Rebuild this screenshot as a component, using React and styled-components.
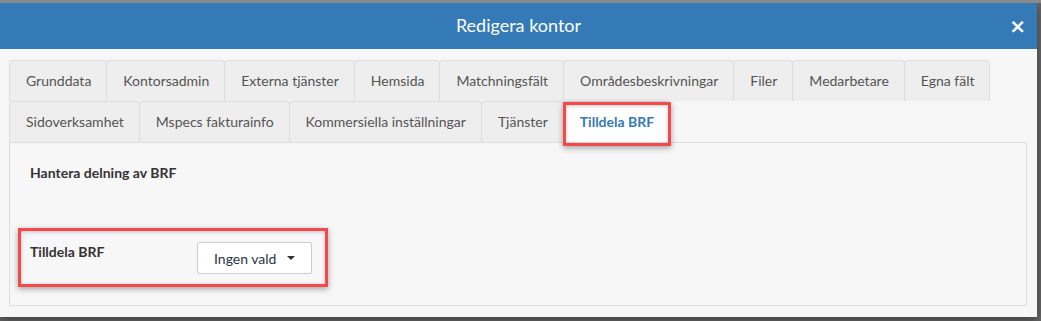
import React from 'react';
import styled, { createGlobalStyle } from 'styled-components';

const GlobalStyle = createGlobalStyle`
  * { box-sizing: border-box; }
  body {
    margin: 0;
    font-family: Lato, "Open Sans", sans-serif;
    font-size: 14px;
    color: #333;
  }
`;

const Backdrop = styled.div`
  width: 1041px;
  height: 321px;
  background: #666;
  border-top: 3px solid #8a8a8a;
  overflow: hidden;
`;

const Modal = styled.div`
  width: 1037px;
  height: 314px;
  background: #f7f7f7;
  display: flex;
  flex-direction: column;
  box-shadow: 0 3px 9px rgba(0, 0, 0, 0.4);
`;

const Header = styled.div`
  position: relative;
  height: 46px;
  background: #337ab7;
  color: #fff;
  display: flex;
  justify-content: center;
  padding-top: 9px;
`;

const Title = styled.h4`
  margin: 0;
  font-size: 18px;
  font-weight: 400;
  line-height: 26px;
`;

const Close = styled.button`
  position: absolute;
  right: 11px;
  top: 13px;
  border: none;
  background: transparent;
  color: #fff;
  font-family: "DejaVu Sans", sans-serif;
  font-size: 20px;
  font-weight: 700;
  line-height: 1;
  padding: 0;
  cursor: pointer;
`;

const Body = styled.div`
  flex: 1;
  padding: 11px 10px 11px 9px;
  display: flex;
  flex-direction: column;
`;

const Tabs = styled.ul`
  list-style: none;
  margin: 0;
  padding: 0 0 0 1px;
  display: flex;
  flex-wrap: wrap;
`;

const Tab = styled.li`
  position: relative;
  margin-left: -1px;
  padding: 10px 15px 10px 16px;
  line-height: 20px;
  font-size: 14px;
  border: 1px solid #ddd;
  border-bottom: none;
  border-radius: 4px 4px 0 0;
  background: ${p => (p.$active ? '#fff' : '#eee')};
  color: ${p => (p.$active ? '#337ab7' : '#555')};
  font-weight: ${p => (p.$active ? 700 : 400)};
  white-space: nowrap;
`;

const Panel = styled.div`
  flex: 1;
  border: 1px solid #ddd;
  background: #f7f7f7;
  padding: 20px 20px 0;
`;

const Heading = styled.div`
  font-weight: 700;
  line-height: 20px;
  color: #333;
  margin-bottom: 59px;
`;

const FormRow = styled.div`
  position: relative;
  display: grid;
  grid-template-columns: 167px auto;
  align-items: start;
  width: 282px;
`;

const Label = styled.label`
  font-weight: 700;
  line-height: 20px;
  color: #333;
`;

const Dropdown = styled.button`
  display: inline-flex;
  align-items: center;
  height: 32px;
  width: 115px;
  padding: 0 16px;
  border: 1px solid #ccc;
  border-radius: 2px;
  background: #fff;
  font-family: Lato, sans-serif;
  font-size: 14px;
  color: #2b3440;
  cursor: pointer;
`;

const Caret = styled.span`
  margin-left: auto;
  width: 0;
  height: 0;
  border-left: 4px solid transparent;
  border-right: 4px solid transparent;
  border-top: 4px solid #333;
`;

const Highlight = styled.span`
  position: absolute;
  top: ${p => p.$t}px;
  right: ${p => p.$r}px;
  bottom: ${p => p.$b}px;
  left: ${p => p.$l}px;
  border: 3px solid #f54848;
  box-shadow: 0 2px 6px rgba(0, 0, 0, 0.35), inset 0 1px 4px rgba(0, 0, 0, 0.2);
  pointer-events: none;
`;

const tabs = [
  'Grunddata',
  'Kontorsadmin',
  'Externa tjänster',
  'Hemsida',
  'Matchningsfält',
  'Områdesbeskrivningar',
  'Filer',
  'Medarbetare',
  'Egna fält',
  'Sidoverksamhet',
  'Mspecs fakturainfo',
  'Kommersiella inställningar',
  'Tjänster',
  'Tilldela BRF',
];

export default function App() {
  const active = 'Tilldela BRF';
  return (
    <>
      <GlobalStyle />
      <Backdrop>
        <Modal>
          <Header>
            <Title>Redigera kontor</Title>
            <Close aria-label="Stäng">×</Close>
          </Header>
          <Body>
            <Tabs>
              {tabs.map(t => (
                <Tab key={t} $active={t === active}>
                  {t}
                  {t === active && <Highlight $t={0} $r={-2} $b={-4} $l={-1} />}
                </Tab>
              ))}
            </Tabs>
            <Panel>
              <Heading>Hantera delning av BRF</Heading>
              <FormRow>
                <Label>Tilldela BRF</Label>
                <Dropdown>
                  Ingen vald
                  <Caret />
                </Dropdown>
                <Highlight $t={-14} $r={-16} $b={-13} $l={-12} />
              </FormRow>
            </Panel>
          </Body>
        </Modal>
      </Backdrop>
    </>
  );
}
